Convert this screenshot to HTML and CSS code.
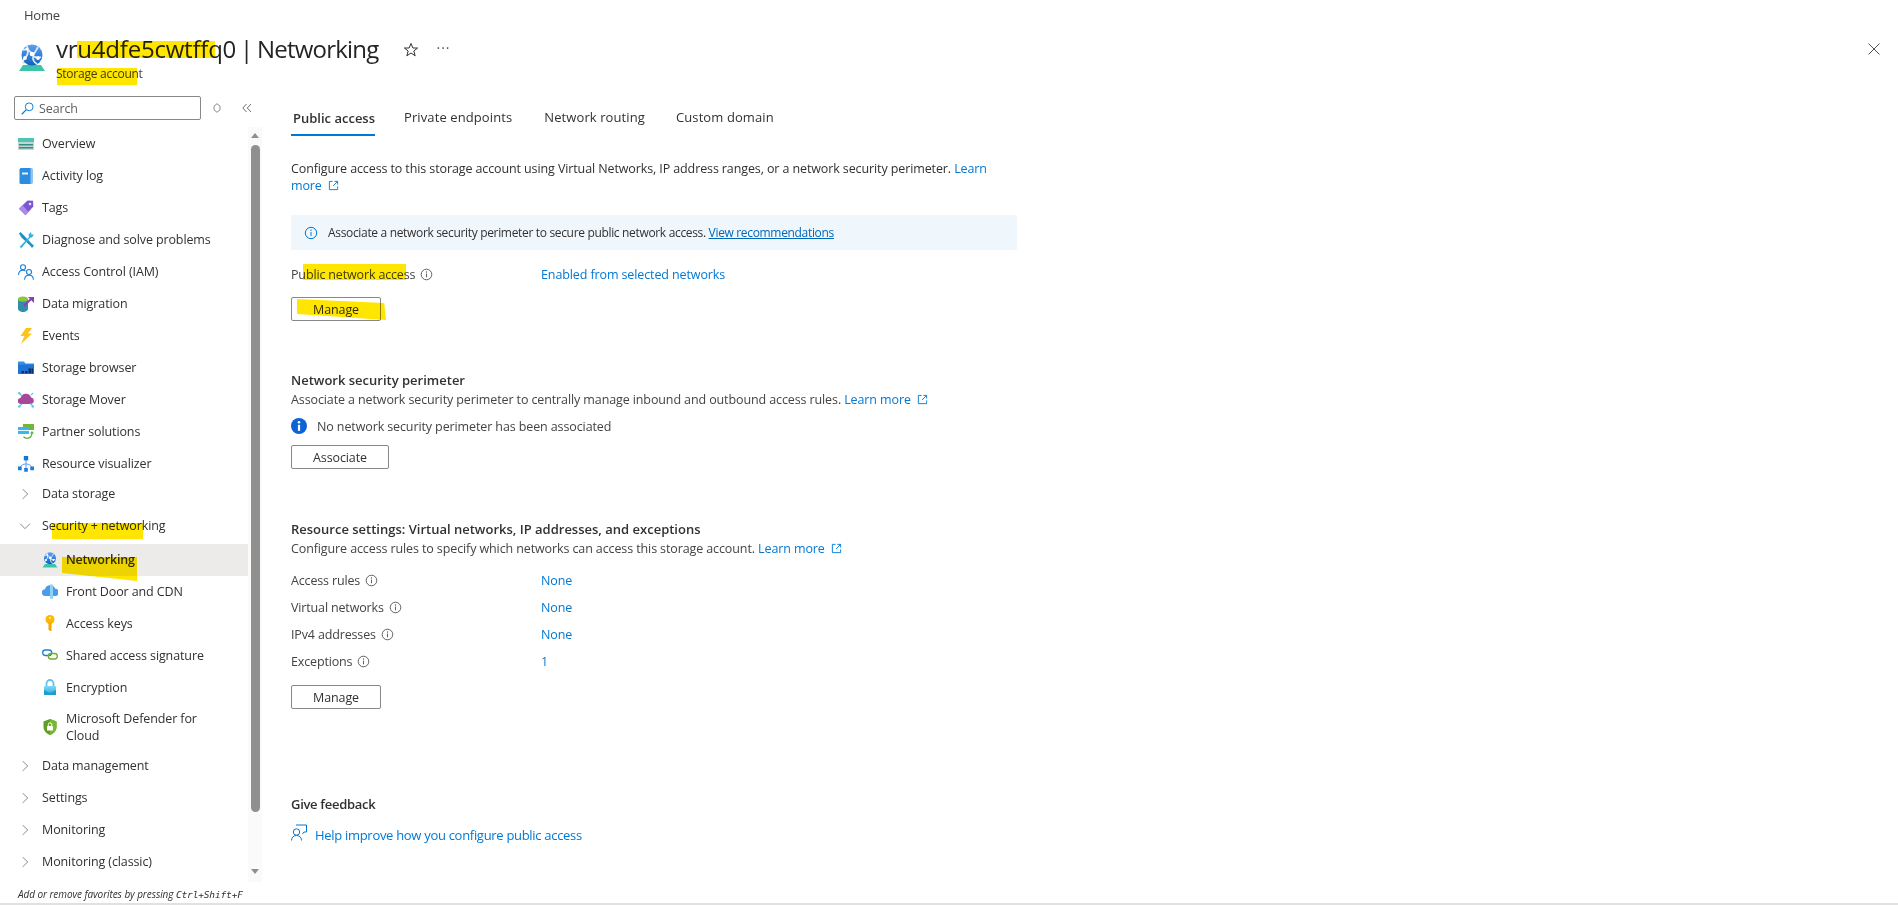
FILE: index.html
```html
<!DOCTYPE html>
<html lang="en">
<head>
<meta charset="utf-8">
<title>Networking</title>
<link rel="stylesheet" href="styles.css">
</head>
<body>
<svg class="defs" aria-hidden="true">
  <defs>
    <linearGradient id="gblue" x1="0" y1="0" x2="0" y2="1"><stop offset="0" stop-color="#5ea0ef"/><stop offset="1" stop-color="#0f62c0"/></linearGradient>
    <linearGradient id="gcyan" x1="0" y1="0" x2="0" y2="1"><stop offset="0" stop-color="#7fdcf5"/><stop offset="1" stop-color="#2aa5d8"/></linearGradient>
    <symbol id="i-net" viewBox="0 0 28 28">
      <path d="M5 21h18l4 6H1z" fill="#3cc4ab"/>
      <circle cx="14" cy="11" r="10.5" fill="url(#gblue)"/>
      <path d="M5 6c5-2 7 1 9 4s5 5 9 3M9 2c2 5 1 9-2 12s-2 5-1 6M20 3c-2 4-5 7-5 11s3 5 4 6" fill="none" stroke="#dcebfa" stroke-width="1.7"/>
      <circle cx="14" cy="10" r="2.3" fill="#fff"/><circle cx="7" cy="14" r="1.9" fill="#fff"/><circle cx="20" cy="14" r="1.9" fill="#fff"/><circle cx="9" cy="5" r="1.6" fill="#fff"/>
    </symbol>
    <symbol id="i-overview" viewBox="0 0 16 16"><path d="M0 2h16v4H0z" fill="#48c8b4"/><path d="M0 6h16v8H0z" fill="#c9d3d6"/><path d="M1 8h14v1.6H1zM1 11h14v1.6H1z" fill="#2f8f80"/></symbol>
    <symbol id="i-log" viewBox="0 0 16 16"><rect x="1.5" y="0" width="13" height="16" rx="1.5" fill="#2b8ce0"/><path d="M12.5 0h.5a1.5 1.5 0 0 1 1.500 1.500v13A1.500 1.500 0 0 1 13 16h-.5z" fill="#8fc4ee"/><path d="M4 4.500h6v2H4z" fill="#e8f2fb"/></symbol>
    <symbol id="i-tag" viewBox="0 0 16 16"><path d="M9.500.5 15 .8l.3 5.700-7.800 8.800L1 8.700z" fill="#7b55d6"/><path d="M1 8.700l6.500 6.600 3-3.400L4.500 5z" fill="#a88be8"/><circle cx="12" cy="4" r="1.300" fill="#e8e0fa"/></symbol>
    <symbol id="i-diag" viewBox="0 0 16 16"><path d="M1 1.500 2.500 0l3 3 8.500 9 2 1.500L14 16l-1.500-2-9-8.500z" fill="#1f8fc4"/><path d="M1.500 15 11 5l-.5-2.500L13 0l.5 2.500L16 2.500 14 5.500l-2 .3L3.500 16z" fill="#36b4dc"/></symbol>
    <symbol id="i-iam" viewBox="0 0 16 16"><g fill="none" stroke="#1a7fd6" stroke-width="1.100"><circle cx="5" cy="3.200" r="2.500"/><path d="M.6 11c0-3 2-4.700 4.400-4.700 1 0 1.800.3 2.500.8"/><circle cx="11" cy="8" r="2.500"/><path d="M6.600 15.800c0-3 2-4.600 4.400-4.600s4.400 1.600 4.400 4.600"/></g></symbol>
    <symbol id="i-mig" viewBox="0 0 16 16"><path d="M0 3v10c0 1.500 2.500 3 5 3s5-1.500 5-3V3z" fill="#2f8fa8"/><ellipse cx="5" cy="3" rx="5" ry="2.600" fill="#8cc63f"/><path d="M6 10l7-7" stroke="#8a3fb5" stroke-width="2"/><path d="M10 1h6v6z" fill="#8a3fb5"/></symbol>
    <symbol id="i-bolt" viewBox="0 0 16 16"><path d="M8 0h6l-4 5.500h4L3 16l3.500-8H2.500z" fill="#fcc419"/></symbol>
    <symbol id="i-folder" viewBox="0 0 16 16"><path d="M0 1.500h6l1.500 2H16V14H0z" fill="#3b8fe6"/><path d="M0 4.500h16V14H0z" fill="#1f74d4"/><path d="M7 11h2.500v2.200H7zM10.500 8.500H13v4.700h-2.500zM13.500 8.500H15v4.700h-1.500zM3.500 11H6v2.200H3.500z" fill="#0b2f6e"/></symbol>
    <symbol id="i-mover" viewBox="0 0 16 16"><path d="M3 12a3 3 0 0 1-.4-6 5.500 5.500 0 0 1 10.500-.5A3.300 3.300 0 0 1 13 12z" fill="#a8459c"/><path d="M1 1l3 3M15 14l-3-2.500M1 14.500l3-2.500M15 1l-2 2" stroke="#5cc8e8" stroke-width="1.200"/><circle cx="1.300" cy="1.300" r="1.200" fill="#5cc8e8"/><circle cx="14.700" cy="14.500" r="1.200" fill="#5cc8e8"/><circle cx="1.300" cy="14.500" r="1.200" fill="#5cc8e8"/></symbol>
    <symbol id="i-partner" viewBox="0 0 16 16"><path d="M5 0h11v6H5z" fill="#74b63a"/><path d="M0 3h11v7H0z" fill="#38b8e8"/><path d="M0 6h11v1H0z" fill="#e8f7fd"/><path d="M14 8.500c0 3.500-2 5.800-5 5.800-1.500 0-2.600-.5-3.500-1.500" fill="none" stroke="#5fb03a" stroke-width="1.300"/><path d="M12 9.500h4L14 7z" fill="#5fb03a"/></symbol>
    <symbol id="i-vis" viewBox="0 0 16 16"><path d="M8 4v8M2 12c1-3 3-4 6-4s5 1 6 4" fill="none" stroke="#5ea0ef" stroke-width="1"/><path d="M5.800 0h4.400v4.400H5.800z" fill="#0f78d4"/><path d="M0 10.500h3.700v3.700H0zM6.200 12h3.600v3.800H6.200zM12.300 10.500H16v3.700h-3.700z" fill="#1a7fd6"/></symbol>
    <symbol id="i-fd" viewBox="0 0 16 16"><path d="M3.500 13a3.400 3.400 0 0 1-.5-6.800 5.300 5.300 0 0 1 10.200-.4A3.600 3.600 0 0 1 12.800 13z" fill="#4a9be8"/><path d="M8 1.500h3v14.300H8z" fill="#8fd2f5"/></symbol>
    <symbol id="i-key" viewBox="0 0 16 16"><circle cx="8" cy="4.500" r="4.500" fill="#fcb900"/><path d="M6.500 7h3v9H8l-1.500-1.500z" fill="#f5a800"/><circle cx="8" cy="3" r="1.100" fill="#fff1b8"/></symbol>
    <symbol id="i-sas" viewBox="0 0 16 16"><rect x=".7" y="3" width="9" height="5.500" rx="2.700" fill="none" stroke="#1a7fd6" stroke-width="1.300"/><rect x="6.300" y="6.500" width="9" height="5.500" rx="2.700" fill="none" stroke="#6fae2e" stroke-width="1.300"/></symbol>
    <symbol id="i-lock" viewBox="0 0 16 16"><path d="M4.500 8V4.500a3.500 3.500 0 0 1 7 0V8" fill="none" stroke="#5cc4ee" stroke-width="1.800"/><rect x="2" y="7" width="12" height="9" rx=".8" fill="url(#gcyan)"/><path d="M2 11l6 3 6-3v5H2z" fill="#1f9bcf"/></symbol>
    <symbol id="i-def" viewBox="0 0 16 16"><path d="M8 0l6.500 2.500v5.500C14.500 12 11 15 8 16 5 15 1.500 12 1.500 8V2.500z" fill="#5e9e23"/><path d="M8 0l6.500 2.500v5.500C14.500 12 11 15 8 16z" fill="#76b82e"/><rect x="5" y="7" width="6" height="4.500" rx=".5" fill="#fff"/><path d="M6.300 7V5.500a1.700 1.700 0 0 1 3.400 0V7" fill="none" stroke="#fff" stroke-width="1"/></symbol>
    <symbol id="i-right" viewBox="0 0 16 16"><path d="M5 1.500 11.500 8 5 14.500" fill="none" stroke="#605e5c" stroke-width="1"/></symbol>
    <symbol id="i-down" viewBox="0 0 16 16"><path d="M1.500 5 8 11.500 14.500 5" fill="none" stroke="#605e5c" stroke-width="1"/></symbol>
    <symbol id="i-info" viewBox="0 0 14 14"><circle cx="7" cy="7" r="5.700" fill="none" stroke="currentColor" stroke-width="1"/><path d="M7 6v4" stroke="currentColor" stroke-width="1"/><circle cx="7" cy="4.300" r=".7" fill="currentColor"/></symbol>
    <symbol id="i-ext" viewBox="0 0 12 12"><path d="M5 1.500H1.500v9h9V7M7 1.500h3.500V5M10.500 1.500 5.500 6.500" fill="none" stroke="#0078d4" stroke-width="1"/></symbol>
  </defs>
</svg>

<div class="breadcrumb">Home</div>

<header class="titlebar">
  <svg class="res-icon"><use href="#i-net"/></svg>
  <div class="titles">
    <h1 class="title">vru4dfe5cwtffq0 | <span class="title-page">Networking</span></h1>
    <div class="subtitle">Storage account</div>
  </div>
  <svg class="star" viewBox="0 0 16 16"><path d="M8 1.500 9.900 6h4.700l-3.800 3 1.400 4.800L8 11l-4.200 2.800L5.200 9 1.400 6h4.700z" fill="none" stroke="#323130" stroke-width="1"/></svg>
  <div class="dots">···</div>
  <svg class="close" viewBox="0 0 12 12"><path d="M.5.500l11 11M11.500.500l-11 11" stroke="#505050" stroke-width="1"/></svg>
</header>

<main class="main">
  <aside class="sidebar">
    <div class="search-row">
      <div class="search">
        <svg class="search-icon" viewBox="0 0 14 14"><circle cx="8.800" cy="5.200" r="4.200" fill="none" stroke="#0078d4" stroke-width="1"/><path d="M5.800 8.200.8 13.200" stroke="#0078d4" stroke-width="1.200"/></svg>
        <span>Search</span>
      </div>
      <svg class="sort" viewBox="0 0 8 10"><path d="M4 .7l3 2.500v3.600l-3 2.500-3-2.500V3.200z" fill="none" stroke="#8a8886" stroke-width="1"/></svg>
      <svg class="collapse" viewBox="0 0 10 10"><path d="M4.500 1 .8 5l3.700 4M9 1 5.300 5 9 9" fill="none" stroke="#707070" stroke-width="1"/></svg>
    </div>
    <div class="nav-wrap">
      <nav class="nav">
        <a class="row"><svg class="ic"><use href="#i-overview"/></svg>Overview</a>
        <a class="row"><svg class="ic"><use href="#i-log"/></svg>Activity log</a>
        <a class="row"><svg class="ic"><use href="#i-tag"/></svg>Tags</a>
        <a class="row"><svg class="ic"><use href="#i-diag"/></svg>Diagnose and solve problems</a>
        <a class="row"><svg class="ic"><use href="#i-iam"/></svg>Access Control (IAM)</a>
        <a class="row"><svg class="ic"><use href="#i-mig"/></svg>Data migration</a>
        <a class="row"><svg class="ic"><use href="#i-bolt"/></svg>Events</a>
        <a class="row"><svg class="ic"><use href="#i-folder"/></svg>Storage browser</a>
        <a class="row"><svg class="ic"><use href="#i-mover"/></svg>Storage Mover</a>
        <a class="row"><svg class="ic"><use href="#i-partner"/></svg>Partner solutions</a>
        <a class="row"><svg class="ic"><use href="#i-vis"/></svg>Resource visualizer</a>
        <a class="row group"><svg class="chev"><use href="#i-right"/></svg>Data storage</a>
        <a class="row group"><svg class="chev"><use href="#i-down"/></svg>Security + networking</a>
        <a class="row sub selected"><svg class="ic"><use href="#i-net"/></svg>Networking</a>
        <a class="row sub"><svg class="ic"><use href="#i-fd"/></svg>Front Door and CDN</a>
        <a class="row sub"><svg class="ic"><use href="#i-key"/></svg>Access keys</a>
        <a class="row sub"><svg class="ic"><use href="#i-sas"/></svg>Shared access signature</a>
        <a class="row sub"><svg class="ic"><use href="#i-lock"/></svg>Encryption</a>
        <a class="row sub tall"><svg class="ic"><use href="#i-def"/></svg><span class="wrap">Microsoft Defender for Cloud</span></a>
        <a class="row group"><svg class="chev"><use href="#i-right"/></svg>Data management</a>
        <a class="row group"><svg class="chev"><use href="#i-right"/></svg>Settings</a>
        <a class="row group"><svg class="chev"><use href="#i-right"/></svg>Monitoring</a>
        <a class="row group"><svg class="chev"><use href="#i-right"/></svg>Monitoring (classic)</a>
      </nav>
      <div class="scrollbar">
        <div class="arrow-up"></div>
        <div class="thumb"></div>
        <div class="arrow-down"></div>
      </div>
    </div>
    <div class="fav-hint">Add or remove favorites by pressing <span class="kbd">Ctrl+Shift+F</span></div>
  </aside>

  <section class="content">
    <div class="tabs">
      <div class="tab active">Public access</div>
      <div class="tab">Private endpoints</div>
      <div class="tab">Network routing</div>
      <div class="tab">Custom domain</div>
    </div>

    <p class="intro">Configure access to this storage account using Virtual Networks, IP address ranges, or a network security perimeter. <a class="link">Learn<br>more <svg class="ext"><use href="#i-ext"/></svg></a></p>

    <div class="banner">
      <svg class="banner-icon"><use href="#i-info"/></svg>
      <span>Associate a network security perimeter to secure public network access. <a class="link-u">View recommendations</a></span>
    </div>

    <div class="kv first">
      <div class="key">Public network access<svg class="tip"><use href="#i-info"/></svg></div>
      <a class="link">Enabled from selected networks</a>
    </div>
    <button class="btn manage-1">Manage</button>

    <h2 class="heading nsp">Network security perimeter</h2>
    <p class="desc">Associate a network security perimeter to centrally manage inbound and outbound access rules. <a class="link">Learn more <svg class="ext"><use href="#i-ext"/></svg></a></p>
    <div class="notice">
      <svg class="notice-icon" viewBox="0 0 16 16"><circle cx="8" cy="8" r="8" fill="#0f62d6"/><circle cx="8" cy="4.300" r="1.300" fill="#fff"/><path d="M6.900 6.800h2.200v6H6.900z" fill="#fff"/></svg>
      <span>No network security perimeter has been associated</span>
    </div>
    <button class="btn associate">Associate</button>

    <h2 class="heading res">Resource settings: Virtual networks, IP addresses, and exceptions</h2>
    <p class="desc">Configure access rules to specify which networks can access this storage account. <a class="link">Learn more <svg class="ext"><use href="#i-ext"/></svg></a></p>

    <div class="kv-list">
      <div class="kv"><div class="key">Access rules<svg class="tip"><use href="#i-info"/></svg></div><a class="link">None</a></div>
      <div class="kv"><div class="key">Virtual networks<svg class="tip"><use href="#i-info"/></svg></div><a class="link">None</a></div>
      <div class="kv"><div class="key">IPv4 addresses<svg class="tip"><use href="#i-info"/></svg></div><a class="link">None</a></div>
      <div class="kv"><div class="key">Exceptions<svg class="tip"><use href="#i-info"/></svg></div><a class="link">1</a></div>
    </div>
    <button class="btn manage-2">Manage</button>

    <h2 class="heading feedback">Give feedback</h2>
    <a class="help">
      <svg class="help-icon" viewBox="0 0 16 17"><g fill="none" stroke="#0078d4" stroke-width="1"><circle cx="5.500" cy="8" r="3.200"/><path d="M.5 16.500c0-3 2-5 5-5s5 2 5 5M5 1h10.500v7H13l-1.500 2"/></g></svg>
      Help improve how you configure public access
    </a>
  </section>
</main>

<div class="hl hl-title"></div>
<div class="hl hl-sub"></div>
<div class="hl hl-pna"></div>
<div class="hl hl-manage"></div>
<div class="hl hl-sec"></div>
<div class="hl hl-net"></div>
</body>
</html>
```

FILE: styles.css
```css
* { box-sizing: border-box; }
html, body { height: 100%; }
body {
  margin: 0;
  position: relative;
  height: 907px;
  overflow: hidden;
  background: #fff;
  color: #323130;
  font-family: "Open Sans", "Liberation Sans", sans-serif;
  font-size: 12.5px;
  letter-spacing: -0.11px;
}
.defs { position: absolute; width: 0; height: 0; }

.breadcrumb { height: 30px; padding-left: 24px; line-height: 30px; font-size: 13px; color: #444; letter-spacing: -0.25px; }

.titlebar { height: 60px; display: flex; align-items: flex-start; padding-left: 18px; padding-right: 18px; }
.res-icon { width: 28px; height: 28px; margin-top: 14px; flex: none; }
.titles { margin-left: 10px; }
.title { margin: 3px 0 0; font-size: 24px; font-weight: 400; line-height: 32px; color: #252423; letter-spacing: -0.22px; word-spacing: -2px; }
.title-page { letter-spacing: -0.8px; }
.subtitle { font-size: 12px; line-height: 16px; margin-top: 1px; color: #444; letter-spacing: -0.25px; }
.star { width: 16px; height: 16px; margin-left: 25px; margin-top: 12px; flex: none; }
.dots { margin-left: 17px; margin-top: 10px; font-size: 14px; line-height: 16px; color: #555; letter-spacing: 1px; }
.close { width: 12px; height: 12px; margin-left: auto; margin-top: 13px; flex: none; }

.main { display: flex; height: 815px; border-bottom: 2px solid #e1e1e1; }

.sidebar { width: 262px; flex: none; display: flex; flex-direction: column; }
.search-row { height: 38px; padding: 6px 0 0 14px; display: flex; align-items: flex-start; }
.search { width: 187px; height: 24px; border: 1px solid #8a8886; border-radius: 2px; display: flex; align-items: center; padding-left: 6px; color: #605e5c; }
.search-icon { width: 13px; height: 13px; margin-right: 5px; }
.sort { width: 8px; height: 10px; margin: 7px 0 0 12px; }
.collapse { width: 10px; height: 10px; margin: 7px 0 0 21px; }

.nav-wrap { height: 754px; display: flex; }
.nav { width: 248px; flex: none; }
.row { display: flex; align-items: center; height: 32px; padding-left: 18px; padding-bottom: 1px; color: #323130; }
.ic { width: 16px; height: 16px; margin-right: 8px; flex: none; }
.row.group { padding-left: 22px; padding-bottom: 5px; }
.chev { width: 12px; height: 12px; margin-right: 11px; margin-left: -3px; flex: none; }
.row.sub { padding-left: 42px; padding-bottom: 2px; }
.row.selected { background: #edebe9; font-weight: 600; letter-spacing: -0.2px; padding-bottom: 1px; }
.row.tall { height: 48px; line-height: 17px; padding-right: 30px; }

.scrollbar { width: 14px; margin-top: -1px; height: 755px; background: #fafafa; display: flex; flex-direction: column; align-items: center; padding-top: 6px; }
.arrow-up { width: 0; height: 0; border-left: 4px solid transparent; border-right: 4px solid transparent; border-bottom: 5px solid #8f8f8f; }
.thumb { width: 9px; height: 667px; margin-top: 7px; background: #8f8f8f; border-radius: 5px; }
.arrow-down { width: 0; height: 0; margin-top: 57px; border-left: 4px solid transparent; border-right: 4px solid transparent; border-top: 5px solid #8f8f8f; }

.fav-hint { padding: 5px 0 0 18px; font-size: 10px; font-style: italic; line-height: 14px; color: #323130; letter-spacing: -0.07px; }
.kbd { font-family: "DejaVu Sans Mono", "Liberation Mono", monospace; font-size: 9.5px; letter-spacing: -0.15px; }

.content { flex: 1; padding-left: 29px; }

.tabs { display: flex; height: 46px; }
.tab { padding: 17px 0 0; margin-right: 31px; height: 46px; line-height: 20px; font-size: 13px; color: #323130; letter-spacing: 0.1px; }
.tab.active { font-weight: 600; border-bottom: 2px solid #0078d4; padding-left: 2px; padding-right: 0; padding-top: 18px; margin-right: 29px; letter-spacing: 0; }
.tab:nth-child(2) { margin-right: 32px; }

.intro { margin: 24px 0 0; width: 730px; line-height: 17px; }
.link { color: #0078d4; }
.link-u { color: #0067b8; text-decoration: underline; }
.ext { width: 11px; height: 11px; margin-left: 3px; vertical-align: -1px; }

.banner { width: 726px; height: 35px; margin-top: 21px; background: #eff6fc; display: flex; align-items: center; padding-left: 13px; font-size: 12px; letter-spacing: -0.33px; }
.banner-icon { width: 14px; height: 14px; color: #0078d4; margin-right: 10px; flex: none; }

.kv { display: flex; align-items: center; height: 27px; }
.kv.first { margin-top: 11px; }
.key { width: 250px; flex: none; display: flex; align-items: center; color: #444; letter-spacing: -0.15px; }
.tip { width: 13px; height: 13px; margin-left: 5px; color: #555; flex: none; }

.btn { display: block; padding: 0; height: 24px; background: #fff; border: 1px solid #8a8886; border-radius: 2px; font: inherit; letter-spacing: inherit; color: #323130; }
.manage-1, .manage-2 { width: 90px; }
.manage-1 { margin-top: 9px; }
.associate { width: 98px; margin-top: 10px; }
.manage-2 { margin-top: 10px; }

.heading { margin: 0; font-size: 13px; font-weight: 600; line-height: 18px; color: #323130; letter-spacing: 0; }
.nsp { margin-top: 50px; }
.res { margin-top: 51px; }
.feedback { margin-top: 86px; letter-spacing: -0.3px; }
.desc { margin: 2px 0 0; line-height: 17px; color: #444; }

.notice { display: flex; align-items: center; height: 18px; margin-top: 9px; color: #444; }
.notice-icon { width: 16px; height: 16px; margin-right: 10px; flex: none; }

.kv-list { margin-top: 10px; }
.kv-list .kv { height: 27px; }

.help { display: flex; align-items: center; margin-top: 12px; height: 20px; color: #0078d4; font-size: 13px; letter-spacing: -0.3px; }
.help-icon { width: 16px; height: 17px; margin-right: 8px; flex: none; margin-top: -6px; }

.hl { position: absolute; background: #ffe600; mix-blend-mode: multiply; }
.hl-title { left: 77px; top: 41px; width: 138px; height: 17px; }
.hl-sub { left: 57px; top: 68px; width: 80px; height: 17px; }
.hl-pna { left: 303px; top: 264px; width: 103px; height: 16px; }
.hl-manage { left: 297px; top: 299px; width: 89px; height: 21px; clip-path: polygon(0 0, 98% 19%, 100% 100%, 0 71%); }
.hl-sec { left: 52px; top: 523px; width: 91px; height: 16px; }
.hl-net { left: 62px; top: 557px; width: 75px; height: 24px; clip-path: polygon(0 0, 100% 0, 100% 100%, 0 67%); }
```
